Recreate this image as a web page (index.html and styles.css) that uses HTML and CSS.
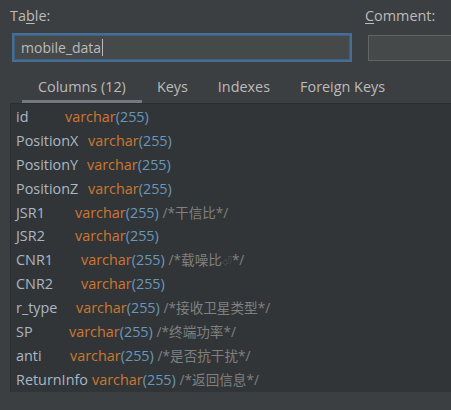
FILE: index.html
```html
<!DOCTYPE html>
<html>
<head>
<meta charset="utf-8">
<link rel="stylesheet" href="styles.css">
</head>
<body>
<div class="dialog">
  <div class="fields">
    <div class="field table-field">
      <label class="label">Ta<u>b</u>le:</label>
      <div class="input focused"><span class="value">mobile_data</span><span class="caret"></span></div>
    </div>
    <div class="field comment-field">
      <label class="label"><u>C</u>omment:</label>
      <div class="input"></div>
    </div>
  </div>
  <div class="tabs">
    <div class="tab active">Columns (12)</div>
    <div class="tab">Keys</div>
    <div class="tab">Indexes</div>
    <div class="tab">Foreign Keys</div>
  </div>
  <div class="panel">
    <div class="row"><span class="name" style="width:49px">id</span><span class="kw">varchar</span><span class="num">(255)</span></div>
    <div class="row"><span class="name" style="width:72px">PositionX</span><span class="kw">varchar</span><span class="num">(255)</span></div>
    <div class="row"><span class="name" style="width:71px">PositionY</span><span class="kw">varchar</span><span class="num">(255)</span></div>
    <div class="row"><span class="name" style="width:72px">PositionZ</span><span class="kw">varchar</span><span class="num">(255)</span></div>
    <div class="row"><span class="name" style="width:59px">JSR1</span><span class="kw">varchar</span><span class="num">(255)</span> <span class="cm">/*干信比*/</span></div>
    <div class="row"><span class="name" style="width:59px">JSR2</span><span class="kw">varchar</span><span class="num">(255)</span></div>
    <div class="row"><span class="name" style="width:65px">CNR1</span><span class="kw">varchar</span><span class="num">(255)</span> <span class="cm">/*载噪比<span class="ret">⏎</span>*/</span></div>
    <div class="row"><span class="name" style="width:65px">CNR2</span><span class="kw">varchar</span><span class="num">(255)</span></div>
    <div class="row"><span class="name" style="width:60px">r_type</span><span class="kw">varchar</span><span class="num">(255)</span> <span class="cm">/*接收卫星类型*/</span></div>
    <div class="row"><span class="name" style="width:53px">SP</span><span class="kw">varchar</span><span class="num">(255)</span> <span class="cm">/*终端功率*/</span></div>
    <div class="row"><span class="name" style="width:54px">anti</span><span class="kw">varchar</span><span class="num">(255)</span> <span class="cm">/*是否抗干扰*/</span></div>
    <div class="row"><span class="name" style="width:76px">ReturnInfo</span><span class="kw">varchar</span><span class="num">(255)</span> <span class="cm">/*返回信息*/</span></div>
  </div>
</div>
</body>
</html>
```
FILE: styles.css
```css
html, body {
  margin: 0;
  padding: 0;
  background: #3c3f41;
  width: 451px;
  height: 410px;
  overflow: hidden;
}
body {
  font-family: "Open Sans", "Noto Sans CJK SC", sans-serif;
  font-size: 14.4px;
  color: #bbbbbb;
}
.dialog {
  display: flex;
  flex-direction: column;
}
.fields {
  display: flex;
  padding: 5px 0 0 10px;
  gap: 12px;
}
.field {
  display: flex;
  flex-direction: column;
}
.table-field { width: 343px; }
.comment-field { flex: 1; }
.label {
  height: 21px;
  line-height: 21px;
  color: #bbbbbb;
}
.label u { text-decoration-thickness: 1px; text-underline-offset: 2px; }
.input {
  margin-top: 9px;
  height: 24px;
  background: #45494a;
  border: 1px solid #646464;
  display: flex;
  align-items: center;
  padding-left: 7px;
}
.table-field .input {
  margin-left: 2px;
  width: 329px;
}
.comment-field .input {
  margin-left: 3px;
  margin-top: 9px;
  border-right: none;
}
.input.focused {
  border: 2px solid #466d94;
  height: 25px;
  margin-top: 7px;
  box-shadow: inset 0 0 0 1px #3d5f80;
}
.value { color: #bbbbbb; font-size: 14px; }
.caret {
  width: 1px;
  height: 17px;
  background: #bbbbbb;
  margin-left: 1px;
}
.tabs {
  display: flex;
  margin-top: 12px;
  padding-left: 22px;
  height: 29px;
}
.tab {
  padding: 0 15px;
  line-height: 26px;
  font-size: 14.4px;
  color: #bbbbbb;
}
.tab.active {
  border-bottom: 3px solid #747a80;
  padding: 0 16px;
}
.panel {
  margin-left: 10px;
  border-left: 1px solid #2b2d2e;
  border-top: 1px solid #2b2d2e;
  background: #323537;
  padding: 1px 0 0 5px;
  flex: 1;
  height: 310px;
}
.row {
  height: 23.9px;
  line-height: 23.9px;
  font-size: 14.4px;
  white-space: pre;
  color: #a9b7c6;
}
.name { color: #a9b7c6; display: inline-block; }
.kw { color: #cc7832; }
.num { color: #6897bb; }
.cm { color: #808080; font-size: 13.6px; }
.ret { color: #5a5a5a; font-size: 10px; }
```
